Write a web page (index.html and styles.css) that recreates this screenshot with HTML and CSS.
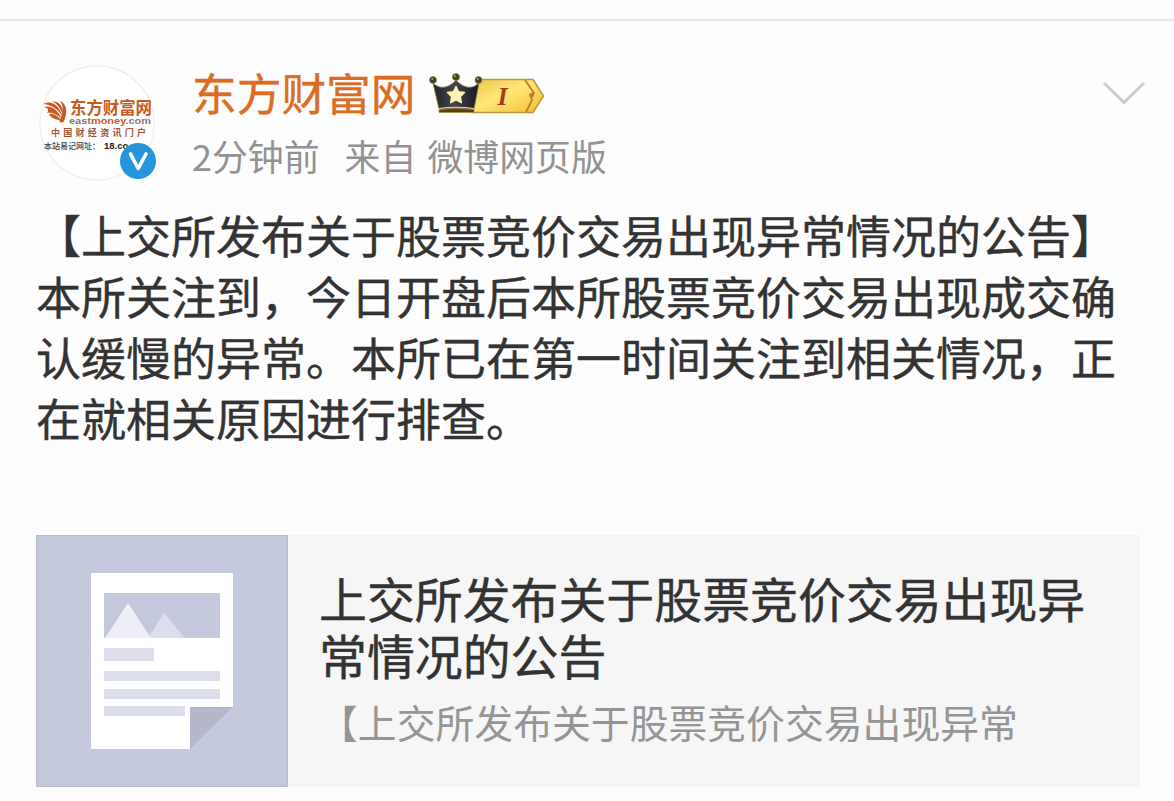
FILE: index.html
```html
<!DOCTYPE html>
<html lang="zh-CN">
<head>
<meta charset="utf-8">
<title>东方财富网</title>
<link rel="stylesheet" href="styles.css">
</head>
<body>
<article class="post">
  <header class="post-head">
    <svg class="avatar" viewBox="0 0 120 120" role="img" aria-label="东方财富网">
      <circle cx="60" cy="58" r="57" fill="#fff" stroke="#eeeeee" stroke-width="1.3"/>
      <g fill="#c85a24">
        <path d="M6 39C13 35 22 38 26 53C22 45 16 40 6 39Z"/>
        <path d="M15 36.500C24 36 27 44 27 53C24 44 21 39 15 36.500Z"/>
        <path d="M23 35.500C30 40 31 47 27 56C26 58 24 58 22 56C27 49 27 42 23 35.500Z"/>
        <path d="M7 42C14 40 20 44 25 54C19 48 13 47 10 48C12 45 11 43 7 42Z"/>
        <path d="M12 49C16 48 21 51 24 55C19 55 14 53 12 49Z"/>
      </g>
      <text class="logo-name" x="33" y="49" textLength="82" lengthAdjust="spacingAndGlyphs">东方财富网</text>
      <text class="logo-domain" x="32" y="58.500" textLength="82" lengthAdjust="spacingAndGlyphs"><tspan fill="#8b7569">east</tspan><tspan fill="#c85a24">money</tspan><tspan fill="#8b7569">.com</tspan></text>
      <text class="logo-tag" x="14" y="71" textLength="95">中国财经资讯门户</text>
      <text class="logo-url" x="7" y="84" textLength="56" lengthAdjust="spacingAndGlyphs">本站易记网址：</text>
      <text class="logo-num" x="67" y="84">18.co</text>
      <circle cx="101" cy="96" r="18" fill="#2795dc"/>
      <path d="M93.500 89L101.200 103.500L109 89" fill="none" stroke="#fff" stroke-width="3.600" stroke-linecap="round" stroke-linejoin="round"/>
    </svg>
    <div class="who">
      <div class="name-row">
        <span class="name">东方财富网</span>
        <svg class="badge" viewBox="0 0 118 46" aria-hidden="true">
          <defs>
            <linearGradient id="gold" x1="0" y1="0" x2="1" y2="1"><stop offset="0" stop-color="#edc34c"/><stop offset=".45" stop-color="#ffe878"/><stop offset="1" stop-color="#f2bd31"/></linearGradient>
            <linearGradient id="crown" x1="0" y1="0" x2="1" y2="0"><stop offset="0" stop-color="#202024"/><stop offset=".45" stop-color="#45454f"/><stop offset="1" stop-color="#17171b"/></linearGradient>
          </defs>
          <path d="M50 8.500H105L115.500 25L105 41.500H44Z" fill="url(#gold)" stroke="#bc943c" stroke-width="1.500"/>
          <path d="M97 9L106 22L102 24L104 29L98 41" fill="none" stroke="#c47c24" stroke-width="1.800"/>
          <circle cx="104" cy="24" r="2.200" fill="#c9781e"/>
          <path d="M5 12C12 19 21 17 28 9C35 17 44 19 51 12L46 38H11Z" fill="url(#crown)" stroke="#8d803e" stroke-width=".9"/>
          <path d="M11 38.500Q28 36 46 38.500V41.500H11Z" fill="#573d18" stroke="#a88a48" stroke-width=".8"/>
          <path d="M11 37.500Q28 35 46 37.500" fill="none" stroke="#f1de95" stroke-width="1.200"/>
          <g fill="#3e421c" stroke="#8b8b4d" stroke-width=".7"><circle cx="5" cy="9" r="3.500"/><circle cx="28" cy="6" r="3.600"/><circle cx="50.500" cy="9" r="3.500"/></g>
          <g fill="#aaa768"><circle cx="4.300" cy="8" r="1"/><circle cx="27" cy="5" r="1"/><circle cx="49.800" cy="8" r="1"/></g>
          <path d="M28 15.500L30.500 20.700L36.500 21.500L32.300 25.700L33.300 31.700L28 28.800L22.700 31.700L23.700 25.700L19.500 21.500L25.500 20.700Z" fill="#fff0b4" stroke="#fff0b4" stroke-width="1.500" stroke-linejoin="round"/>
          <text class="badge-level" x="74.500" y="34" text-anchor="middle">I</text>
        </svg>
      </div>
      <div class="meta"><span>2分钟前</span><span>来自 微博网页版</span></div>
    </div>
    <svg class="more" viewBox="0 0 44 26" aria-hidden="true"><path d="M2 3L22 22.500L42 3" fill="none" stroke="#cbcbcb" stroke-width="3"/></svg>
  </header>
  <p class="content">【上交所发布关于股票竞价交易出现异常情况的公告】<br>本所关注到，今日开盘后本所股票竞价交易出现成交确<br>认缓慢的异常。本所已在第一时间关注到相关情况，正<br>在就相关原因进行排查。</p>
  <section class="card">
    <svg class="thumb" viewBox="0 0 252 252" aria-hidden="true">
      <rect width="252" height="252" fill="#c3c8dc"/>
      <rect x=".5" y=".5" width="251" height="251" fill="none" stroke="#b6bccd"/>
      <path d="M55 38H197V172L154 214H55Z" fill="#fff"/>
      <path d="M154 172H197V214H154Z" fill="#c3c8dc"/>
      <path d="M154 172H197L154 214Z" fill="#b5b8cc"/>
      <rect x="68" y="58" width="116" height="45" fill="#c3c8dc"/>
      <path d="M112 103L128 78L149 103Z" fill="#dcdeec"/>
      <path d="M69 103L92 68L115 103Z" fill="#eeeef8"/>
      <path d="M68 113H118V126H68ZM68 136H184V146H68ZM68 154H184V164H68ZM68 171H149V181H68Z" fill="#dcdeeb"/>
    </svg>
    <div class="card-body">
      <h2 class="card-title">上交所发布关于股票竞价交易出现异<br>常情况的公告</h2>
      <p class="card-desc">【上交所发布关于股票竞价交易出现异常</p>
    </div>
  </section>
</article>
</body>
</html>
```
FILE: styles.css
```css
* { box-sizing: border-box; }
body {
  margin: 0;
  background: #fdfdfd;
  font-family: "Noto Sans CJK SC", sans-serif;
  color: #333;
  text-spacing-trim: space-all;
  overflow: hidden;
}
.post {
  height: 782px;
  margin-top: 19px;
  padding: 40px 34px 0 36px;
  border-top: 2px solid #e5e5e5;
}
.post-head { display: flex; height: 143px; }
.avatar { width: 120px; height: 120px; margin: 4px 0 0 1px; flex: none; }
.logo-name { font-size: 17px; font-weight: 700; fill: #c85a24; }
.logo-domain { font: 700 9.500px "Liberation Sans", sans-serif; }
.logo-tag { font-size: 9px; font-weight: 700; fill: #a3542f; }
.logo-url { font-size: 8.500px; font-weight: 500; fill: #444; }
.logo-num { font: 700 9.500px "Liberation Sans", sans-serif; fill: #222; }
.who { margin-left: 35px; flex: 1; }
.name-row { display: flex; height: 64px; }
.name {
  font-size: 44.700px;
  line-height: 62px;
  color: #dc6c21;
  white-space: nowrap;
  -webkit-text-stroke: .4px #dc6c21;
}
.badge { width: 118px; height: 46px; margin: 10px 0 0 13px; }
.badge-level { font: italic 700 26px "Liberation Serif", serif; fill: #a63b17; }
.meta {
  display: flex;
  gap: 25px;
  font-size: 35.900px;
  line-height: 60px;
  color: #929292;
  white-space: nowrap;
  word-spacing: 3px;
}
.more { width: 44px; height: 26px; margin: 19px -6px 0 0; flex: none; }
.content {
  margin: 0;
  font-size: 45px;
  line-height: 61px;
  white-space: nowrap;
  -webkit-text-stroke: .4px #333;
}
.card {
  display: flex;
  height: 252px;
  margin-top: 87px;
  background: #f6f6f6;
}
.thumb { width: 252px; height: 252px; flex: none; }
.card-body { padding: 34px 0 0 31px; white-space: nowrap; }
.card-title {
  margin: 0;
  font-size: 47.900px;
  font-weight: 400;
  line-height: 57px;
  -webkit-text-stroke: .4px #333;
}
.card-desc { margin: 10px 0 0; font-size: 38.850px; line-height: 56px; color: #959595; }
```
